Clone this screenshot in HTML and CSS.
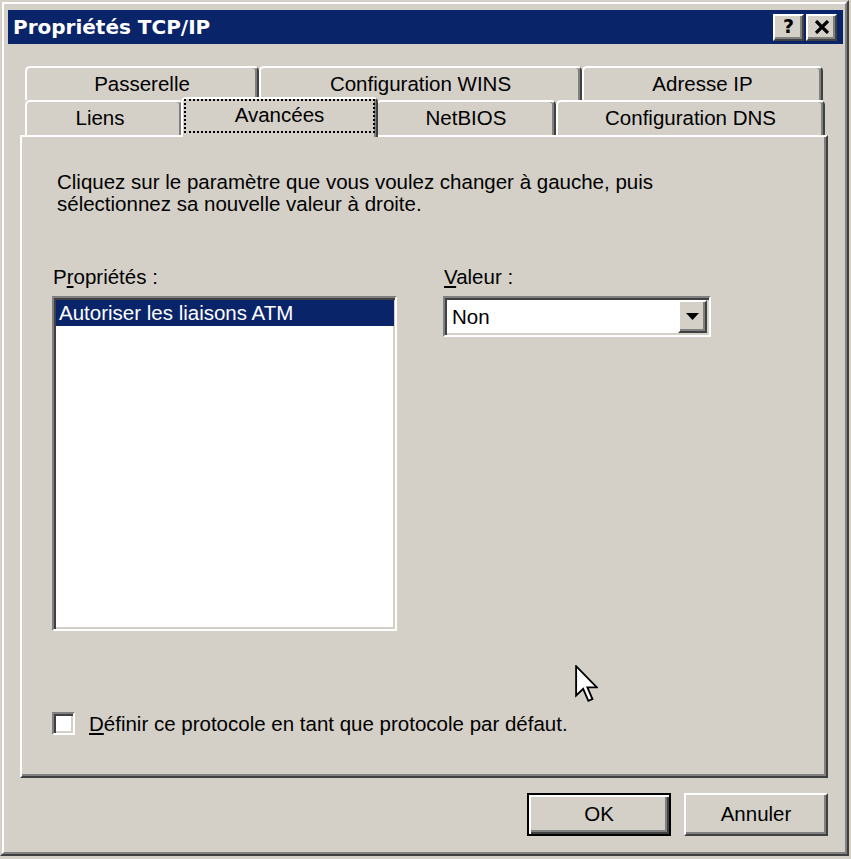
FILE: index.html
```html
<!DOCTYPE html>
<html lang="fr">
<head>
<meta charset="utf-8">
<title>Propriétés TCP/IP</title>
<link rel="stylesheet" href="styles.css">
</head>
<body>
<div class="window">
  <div class="frame">
    <div class="titlebar">
      <span class="title">Propriétés TCP/IP</span>
      <div class="caption-btns">
        <span class="cbtn help">?</span>
        <span class="cbtn close">
          <svg width="16" height="14" viewBox="0 0 16 14"><path d="M2 1 L14 13 M14 1 L2 13" stroke="#000" stroke-width="3.2" fill="none"/></svg>
        </span>
      </div>
    </div>

    <div class="tabs">
      <div class="tabrow back">
        <div class="tab t-passerelle">Passerelle</div>
        <div class="tab t-wins">Configuration WINS</div>
        <div class="tab t-ip">Adresse IP</div>
      </div>
      <div class="tabrow front">
        <div class="tab t-liens">Liens</div>
        <div class="tab t-avancees selected"><span class="focus">Avancées</span></div>
        <div class="tab t-netbios">NetBIOS</div>
        <div class="tab t-dns">Configuration DNS</div>
      </div>
    </div>

    <div class="panel">
      <p class="intro">Cliquez sur le paramètre que vous voulez changer à gauche, puis<br>sélectionnez sa nouvelle valeur à droite.</p>
      <div class="cols">
        <div class="col col-left">
          <div class="label">P<u>r</u>opriétés :</div>
          <div class="listbox">
            <div class="item selected-item">Autoriser les liaisons ATM</div>
          </div>
        </div>
        <div class="col col-right">
          <div class="label"><u>V</u>aleur :</div>
          <div class="combo">
            <span class="combo-value">Non</span>
            <span class="combo-drop">
              <svg width="13" height="7" viewBox="0 0 13 7"><path d="M0 0 H13 L6.5 7 Z" fill="#000"/></svg>
            </span>
          </div>
        </div>
      </div>
      <div class="check">
        <span class="checkbox"></span>
        <span class="check-label"><u>D</u>éfinir ce protocole en tant que protocole par défaut.</span>
      </div>
    </div>

    <div class="buttons">
      <button class="btn default">OK</button>
      <button class="btn">Annuler</button>
    </div>
  </div>

  <svg class="cursor" width="23" height="38" viewBox="0 0 12.4 20.4">
    <path d="M0.6 0.6 V16.4 L4.4 12.8 L7.2 19.3 L9.4 18.3 L6.7 12 H11.8 Z" fill="#fff" stroke="#000" stroke-width="1" stroke-linejoin="miter"/>
  </svg>
</div>
</body>
</html>
```

FILE: styles.css
```css
body {
  margin: 0;
  background: #d4d0c8;
  font-family: "Liberation Sans", Arial, sans-serif;
  font-size: 20.5px;
  color: #000;
}

.window {
  position: relative;
  width: 849px;
  height: 856px;
  box-sizing: border-box;
  border: 2px solid;
  border-color: #d4d0c8 #404040 #404040 #d4d0c8;
  background: #d4d0c8;
}

.frame {
  height: 100%;
  box-sizing: border-box;
  border: 2px solid;
  border-color: #fff #808080 #808080 #fff;
  padding: 6px 2px 0 4px;
  display: flex;
  flex-direction: column;
}

/* Title bar */
.titlebar {
  height: 34px;
  background: #0a246a;
  display: flex;
  align-items: center;
  justify-content: space-between;
  padding-left: 5px;
}

.title {
  font-family: "DejaVu Sans", sans-serif;
  font-weight: bold;
  font-size: 20px;
  color: #fff;
}

.caption-btns {
  display: flex;
  gap: 2px;
  margin-right: 6px;
}

.cbtn {
  width: 31px;
  height: 27px;
  box-sizing: border-box;
  background: #d4d0c8;
  border: 2px solid;
  border-color: #fff #404040 #404040 #fff;
  box-shadow: inset -2px -2px #808080;
  display: flex;
  align-items: center;
  justify-content: center;
}

.cbtn.help {
  font-family: "DejaVu Sans", sans-serif;
  font-weight: bold;
  font-size: 19px;
  line-height: 1;
  padding-bottom: 1px;
}

/* Tabs */
.tabs {
  margin-top: 22px;
  margin-left: 17px;
  position: relative;
  z-index: 2;
}

.tabrow {
  display: flex;
}

.tabrow.back {
  height: 34px;
}

.tabrow.front {
  height: 35px;
}

.tab {
  box-sizing: border-box;
  background: #d4d0c8;
  border-top: 2px solid #fff;
  border-left: 2px solid #fff;
  border-right: 2px solid #404040;
  box-shadow: inset -2px 0 #808080;
  border-radius: 5px 5px 0 0;
  display: flex;
  align-items: center;
  justify-content: center;
  padding-bottom: 1px;
}

.t-passerelle { width: 234px; }
.t-wins { width: 323px; }
.t-ip { width: 241px; }

.t-liens { width: 158px; padding-right: 8px; }
.t-avancees { width: 193px; }
.t-netbios { width: 180px; }
.t-dns { width: 269px; }

.tab.selected {
  position: relative;
  z-index: 3;
  margin: -3px -2px -2px -2px;
  width: 197px;
  padding: 0 1px 4px 1px;
  align-items: stretch;
}

.focus {
  flex: 1;
  border: 2px dotted #000;
  display: flex;
  align-items: center;
  justify-content: center;
  padding-bottom: 2px;
}

/* Panel */
.panel {
  position: relative;
  z-index: 1;
  height: 643px;
  box-sizing: border-box;
  margin: 0 15px 0 12px;
  border: 2px solid;
  border-color: #fff #404040 #404040 #fff;
  box-shadow: inset -2px -2px #808080;
  padding: 34px 0 0 30px;
}

.intro {
  margin: 0 0 0 5px;
  line-height: 22px;
}

.cols {
  display: flex;
  gap: 46px;
  margin-top: 51px;
}

.label {
  line-height: 22px;
  padding-left: 1px;
  margin-bottom: 8px;
}

.listbox {
  width: 345px;
  height: 335px;
  box-sizing: border-box;
  background: #fff;
  border: 2px solid;
  border-color: #808080 #fff #fff #808080;
  box-shadow: inset 2px 2px #404040, inset -2px -2px #d4d0c8;
  padding: 2px 1px 1px 2px;
}

.item {
  height: 26px;
  line-height: 26px;
  padding-left: 3px;
  white-space: nowrap;
}

.selected-item {
  background: #0a246a;
  color: #fff;
}

.combo {
  width: 268px;
  height: 41px;
  box-sizing: border-box;
  background: #fff;
  border: 2px solid;
  border-color: #808080 #fff #fff #808080;
  box-shadow: inset 2px 2px #404040, inset -2px -2px #d4d0c8;
  display: flex;
  align-items: stretch;
  justify-content: space-between;
  padding: 2px;
}

.combo-value {
  display: flex;
  align-items: center;
  padding-left: 5px;
}

.combo-drop {
  width: 29px;
  box-sizing: border-box;
  background: #d4d0c8;
  border: 2px solid;
  border-color: #fff #404040 #404040 #fff;
  box-shadow: inset -2px -2px #808080;
  display: flex;
  align-items: center;
  justify-content: center;
  padding-right: 1px;
}

.check {
  display: flex;
  align-items: center;
  margin-top: 80px;
  height: 25px;
}

.checkbox {
  width: 23px;
  height: 23px;
  box-sizing: border-box;
  background: #fff;
  border: 2px solid;
  border-color: #808080 #fff #fff #808080;
  box-shadow: inset 2px 2px #404040, inset -2px -2px #d4d0c8;
}

.check-label {
  margin-left: 14px;
}

/* Buttons */
.buttons {
  display: flex;
  justify-content: flex-end;
  gap: 13px;
  margin-top: 15px;
  padding-right: 15px;
}

.btn {
  width: 144px;
  height: 43px;
  box-sizing: border-box;
  background: #d4d0c8;
  font-family: inherit;
  font-size: 20.5px;
  color: #000;
  border: 2px solid;
  border-color: #fff #404040 #404040 #fff;
  box-shadow: inset -2px -2px #808080;
  padding: 0 0 2px 0;
}

.btn.default {
  border-color: #000;
  box-shadow: inset 2px 2px #fff, inset -2px -2px #404040, inset -4px -4px #808080;
}

.cursor {
  position: absolute;
  left: 573px;
  top: 663px;
}
```
